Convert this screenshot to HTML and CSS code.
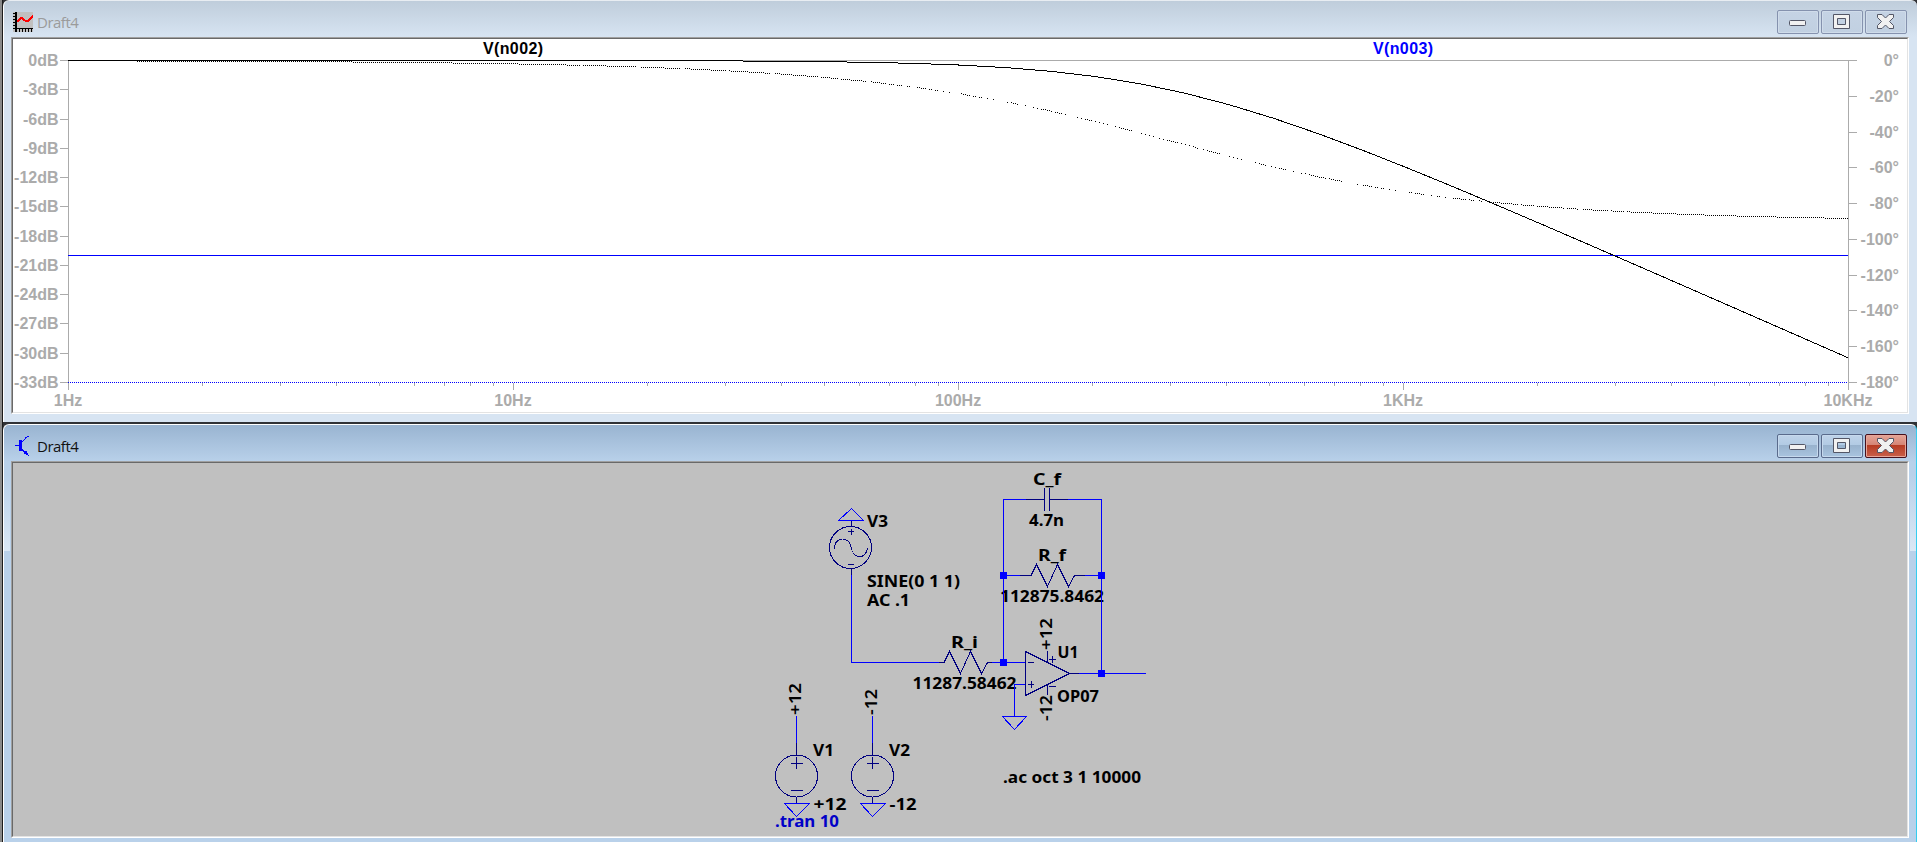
FILE: index.html
```
<!DOCTYPE html>
<html lang="en">
<head>
<meta charset="utf-8">
<title>Draft4</title>
<link rel="stylesheet" href="styles.css">
</head>
<body>
<main class="desktop">
  <section class="window plot-window">
    <header class="titlebar">
      <svg class="app-icon" viewBox="0 0 20 20" shape-rendering="crispEdges">
        <path d="M0 0h20v20H0z" fill="#c0c0c0"/>
        <path d="M2 0h2v20H2zM2 16h18v1H2zM0 1h2v1H0zM0 4h2v1H0zM0 7h2v1H0zM0 10h2v1H0zM0 13h2v1H0zM0 16h2v1H0zM6 17h1v3H6zM9 17h1v3H9zM12 17h1v3h-1zM15 17h1v3h-1zM18 17h1v3h-1z"/>
        <path d="M4 10L7 7Q9 5 11 8Q14 10 16 8L20 4" fill="none" stroke="#f00" stroke-width="2"/>
      </svg>
      <h1 class="title">Draft4</h1>
      <div class="controls">
        <span class="btn"><svg class="glyph" viewBox="0 0 40 22"><rect x="11.5" y="9.5" width="16" height="5" rx="1"/></svg></span>
        <span class="btn"><svg class="glyph" viewBox="0 0 40 22"><path fill-rule="evenodd" d="M11.5 3.5h16v14h-16zM15.500 7.500h8v6h-8z"/></svg></span>
        <span class="btn"><svg class="glyph" viewBox="0 0 40 22"><path d="M11.500 3.500h4.500l3.500 3.500 3.500-3.500h4.500v3l-4 4 4 4v3H23l-3.500-3.500-3.500 3.500h-4.500v-3l4-4-4-4z"/></svg></span>
      </div>
    </header>
    <div class="client plot-client">
      <svg class="plot" viewBox="13 39 1894 373" shape-rendering="crispEdges">
        <g id="axes" class="axes"></g>
        <g id="labels" class="axis-labels"></g>
        <text class="trace-name" x="483" y="54" textLength="60">V(n002)</text>
        <text class="trace-name trace-blue" x="1373" y="54" textLength="60">V(n003)</text>
        <path class="line blue" d="M68 255.5H1848"/>
        <path class="line blue dotted" d="M68 382.500H1848"/>
        <path id="magnitude" class="line"/>
        <path id="phase"/>
      </svg>
    </div>
  </section>

  <section class="window schematic-window">
    <header class="titlebar">
      <svg class="app-icon" viewBox="0 0 20 20" shape-rendering="crispEdges">
        <path d="M2 9h4v1H2zM6 4h3v11H6zM9 5h1v1H9zM10 4h1v1h-1zM11 3h1v1h-1zM12 2h1v1h-1zM12 1h2v1h-2zM14 0h2v1h-2zM9 13h1v2H9zM10 14h1v2h-1zM11 15h2v3h-2zM13 15h1v4h-1zM14 17h1v2h-1zM15 19h1v1h-1z" fill="#00f"/>
      </svg>
      <h1 class="title">Draft4</h1>
      <div class="controls">
        <span class="btn"><svg class="glyph" viewBox="0 0 40 22"><rect x="11.5" y="9.5" width="16" height="5" rx="1"/></svg></span>
        <span class="btn"><svg class="glyph" viewBox="0 0 40 22"><path fill-rule="evenodd" d="M11.5 3.5h16v14h-16zM15.500 7.500h8v6h-8z"/></svg></span>
        <span class="btn btn-close"><svg class="glyph" viewBox="0 0 40 22"><path d="M11.500 3.500h4.500l3.500 3.500 3.500-3.500h4.500v3l-4 4 4 4v3H23l-3.500-3.500-3.500 3.500h-4.500v-3l4-4-4-4z"/></svg></span>
      </div>
    </header>
    <div class="client schematic-client">
      <svg class="schematic" viewBox="13 463 1894 373" shape-rendering="crispEdges">
        <g class="sch-text">
          <text x="867" y="526.500" textLength="21" lengthAdjust="spacingAndGlyphs">V3</text>
          <text x="867" y="586.500" textLength="93" lengthAdjust="spacingAndGlyphs">SINE(0 1 1)</text>
          <text x="867" y="606" textLength="43" lengthAdjust="spacingAndGlyphs">AC .1</text>
          <text x="1033" y="485" textLength="28" lengthAdjust="spacingAndGlyphs">C_f</text>
          <text x="1029" y="526" textLength="35" lengthAdjust="spacingAndGlyphs">4.7n</text>
          <text x="1038" y="561" textLength="28" lengthAdjust="spacingAndGlyphs">R_f</text>
          <text x="1000" y="602" textLength="104" lengthAdjust="spacingAndGlyphs">112875.8462</text>
          <text x="951" y="648" textLength="27" lengthAdjust="spacingAndGlyphs">R_i</text>
          <text x="912.500" y="689" textLength="104" lengthAdjust="spacingAndGlyphs">11287.58462</text>
          <text x="1057.500" y="658" textLength="21" lengthAdjust="spacingAndGlyphs">U1</text>
          <text x="1057" y="702" textLength="42" lengthAdjust="spacingAndGlyphs">OP07</text>
          <text x="813" y="756" textLength="21" lengthAdjust="spacingAndGlyphs">V1</text>
          <text x="889" y="756" textLength="21" lengthAdjust="spacingAndGlyphs">V2</text>
          <text x="813.500" y="810" textLength="33" lengthAdjust="spacingAndGlyphs">+12</text>
          <text x="889.500" y="810" textLength="27" lengthAdjust="spacingAndGlyphs">-12</text>
          <text x="1003" y="783" textLength="138" lengthAdjust="spacingAndGlyphs">.ac oct 3 1 10000</text>
          <text class="tran" x="775" y="827" textLength="64" lengthAdjust="spacingAndGlyphs">.tran 10</text>
          <text class="net" transform="translate(801 715) rotate(-90)" textLength="32" lengthAdjust="spacingAndGlyphs">+12</text>
          <text class="net" transform="translate(877 715) rotate(-90)" textLength="26" lengthAdjust="spacingAndGlyphs">-12</text>
          <text class="net" transform="translate(1052 650) rotate(-90)" textLength="32" lengthAdjust="spacingAndGlyphs">+12</text>
          <text class="net" transform="translate(1052 721) rotate(-90)" textLength="26" lengthAdjust="spacingAndGlyphs">-12</text>
        </g>
        <g class="wire">
          <path d="M851.500 575V662.500H940M991 662.500H1025M1003.500 662V499.500H1026M1068 499.500H1101.500V673M1004 575.500H1020M1085 575.500H1101M1079 673.500H1146M1025 684.500H1014.500V716"/>
          <path d="M796.500 716V743M872.500 716V743"/>
          <path d="M838.500 520.500H863.500L851.500 508.500ZM1002.500 716.500H1026.500L1014.500 729.500ZM784.500 803.500H809.500L796.500 816.500ZM860.500 803.500H885.500L872.500 816.500Z"/>
        </g>
        <g class="part">
          <circle cx="850.500" cy="547.500" r="21"/>
          <path d="M851.500 521V527M851.500 569V575M848 531.500H854M851.500 529V535M848 564.500H854M834.500 549C834.500 537 847 536 850.500 545C852.500 560 866 560 867.500 548"/>
          <circle cx="796.500" cy="776" r="21"/>
          <circle cx="872.500" cy="776" r="21"/>
          <path d="M796.500 743V755M872.500 743V755M796.500 797V803M872.500 797V803M791 763.500H803M796.500 757V769M867 763.500H879M872.500 757V769M791 790.500H803M867 790.500H879"/>
          <path d="M939 662.500H944L949.500 651.500 960.500 673.500 970.500 651.500 981.500 673.500 987.500 662.500H992"/>
          <path d="M1020 575.500H1031L1036.500 564.500 1047.500 586.500 1057.500 564.500 1068.500 586.500 1074.500 575.500H1085"/>
          <path d="M1026 499.500H1044.500M1049.500 499.500H1068M1044.500 488V511M1049.500 488V511"/>
          <path d="M1025.500 651.500V695.500L1069.500 673.500ZM1069 673.500H1079M1047.500 651V662M1047.500 684V695M1028 662.500H1034M1028 684.500H1034M1031.500 681V688M1049 659.500H1056M1052.500 656V663M1049 686.500H1056"/>
        </g>
        <path class="junction" d="M1000 572h7v7h-7zM1098 572h7v7h-7zM1000 659h7v7h-7zM1098 670h7v7h-7z"/>
      </svg>
    </div>
  </section>
</main>
<script src="plot.js"></script>
</body>
</html>
```
FILE: styles.css
```
* { box-sizing: border-box; }
body { margin: 0; background: #303030; }
.desktop {
  width: 1917px;
  height: 842px;
  overflow: hidden;
  padding-left: 3px;
  background: linear-gradient(90deg, #8a8a8a 0 2px, #1c1c1c 2px 3px, #303236 3px);
}
.window {
  display: flex;
  flex-direction: column;
  border: 1px solid #fff;
  border-right-width: 0;
  border-radius: 6px 6px 0 0;
  padding: 0 8px 0 7px;
}
.plot-window {
  height: 422px;
  border-top-color: #e8edf2;
  border-bottom-width: 0;
  background: linear-gradient(#bfcddb 0, #d7e4f2 36px);
}
.schematic-window {
  height: 429px;
  margin-top: 2px;
  border-bottom-width: 0;
  border-right: 1px solid #35cdf0;
  padding-right: 7px;
  background:
    linear-gradient(#b9d1ea, #dbe8f5) 100% 50px / 6px 76px no-repeat,
    linear-gradient(#b9d1ea, #dbe8f5) 0 50px / 6px 76px no-repeat,
    linear-gradient(#99b4d1 0, #b9d1ea 37px);
}
.titlebar {
  display: flex;
  align-items: flex-start;
  flex: none;
  height: 36px;
  padding: 9px 2px 0;
}
.app-icon { width: 20px; height: 20px; margin-top: 2px; }
.title {
  flex: 1;
  margin: 1px 0 0 4px;
  font: 15px/22px "Open Sans", "Noto Sans", sans-serif;
  letter-spacing: -0.5px;
  color: #9b9b9b;
}
.schematic-window .title { color: #111; }
.controls { display: flex; gap: 2px; }
.btn {
  width: 42px;
  height: 24px;
  border: 1px solid #8592ae;
  border-radius: 2px;
  background: linear-gradient(#c5d3e4, #c1d0e1);
  box-shadow: inset 0 0 0 1px #d0dcea;
}
.schematic-window .btn {
  border-color: #5a6b8c;
  background: linear-gradient(#bfd3e9 0, #b2cbe4 45%, #98b2cd 46%, #a9c4df 100%);
  box-shadow: inset 0 0 0 1px #c6d9ed;
}
.schematic-window .btn-close {
  border-color: #46101c;
  background: linear-gradient(#e5a598 0, #d58575 45%, #b63b22 46%, #c9604b 100%);
  box-shadow: inset 0 0 0 1px #e6a699;
}
.glyph { display: block; width: 40px; height: 22px; fill: #f1f1f1; stroke: #535666; }
.client {
  flex: none;
  border: 1px solid;
  border-color: #a0a0a0 #fff #fff #a0a0a0;
}
.plot, .schematic {
  display: block;
  width: 1896px;
  height: 375px;
  border: 1px solid;
  border-color: #696969 #e3e3e3 #e3e3e3 #696969;
}
.plot { background: #fff; }
.schematic { background: #c0c0c0; }
.axes { fill: none; stroke: #ababab; }
.axis-labels, .trace-name { font: bold 16px "Liberation Sans", Arial, sans-serif; }
.axis-labels { fill: #ababab; }
.end { text-anchor: end; }
.middle { text-anchor: middle; }
.trace-blue { fill: #00f; }
.line { fill: none; stroke: #000; }
.blue { stroke: #00f; }
.dotted { stroke-dasharray: 1 1; }
.sch-text { font: 700 16px "Noto Sans", "Open Sans", sans-serif; }
.tran { fill: #0000c8; }
.net { font-weight: 600; }
.wire { fill: none; stroke: #00f; }
.part { fill: none; stroke: #000080; }
.junction { fill: #00f; }
```
FILE: plot.js
```
const LEFT = 68, RIGHT = 1848, TOP = 60, BOTTOM = 382;
const SPAN = BOTTOM - TOP, DECADE = (RIGHT - LEFT) / 4;
const CORNER = 1 / (2 * Math.PI * 112875.8462 * 4.7e-9);
const NS = 'http://www.w3.org/2000/svg';
const byId = id => document.getElementById(id);

function label(x, y, text, cls) {
  const node = document.createElementNS(NS, 'text');
  node.setAttribute('x', x);
  node.setAttribute('y', y);
  node.setAttribute('class', cls);
  node.textContent = text;
  byId('labels').append(node);
}

let axes = `M${LEFT} ${TOP + .5}H${RIGHT}M${LEFT + .5} ${TOP}V390M${RIGHT + .5} ${TOP}V390`;
for (let i = 0; i <= 11; i++) {
  const y = Math.round(TOP + i * SPAN / 11);
  axes += `M60 ${y + .5}H68`;
  label(58.5, y + 6, `${i ? -3 * i : 0}dB`, 'end');
}
for (let i = 0; i <= 9; i++) {
  const y = Math.round(TOP + i * SPAN / 9);
  axes += `M1849 ${y + .5}H1857`;
  label(1899, y + 6, `${i ? -20 * i : 0}°`, 'end');
}
['1Hz', '10Hz', '100Hz', '1KHz', '10KHz'].forEach((name, d) => {
  const x = LEFT + d * DECADE;
  axes += `M${x + .5} 383V390`;
  label(x, 406, name, 'middle');
  if (d < 4) for (let k = 2; k < 10; k++) {
    axes += `M${Math.round(x + Math.log10(k) * DECADE) + .5} 383V386`;
  }
});
const axisPath = document.createElementNS(NS, 'path');
axisPath.setAttribute('d', axes);
byId('axes').append(axisPath);

const magY = f => TOP + 10 * Math.log10(1 + (f / CORNER) ** 2) * SPAN / 33;
const phaseY = f => TOP + Math.atan(f / CORNER) * 180 / Math.PI * SPAN / 180;

// Three points per octave, joined by straight segments.
const points = [];
for (let i = 0; i < 40; i++) points.push(2 ** (i / 3));
points.push(10000);
const xOf = f => LEFT + Math.log10(f) * DECADE;
byId('magnitude').setAttribute('d', 'M' + points.map(f => `${xOf(f)} ${magY(f) + .5}`).join('L'));

// Spans where the dotted pen skips.
const skips = [[537,539],[580,583],[635,640],[679,684],[725,729],[770,775],[817,821],[838,841],
[866,871],[885,888],[893,896],[901,906],[909,916],[925,928],[932,934],[937,942],[943,948],[949,961],
[970,973],[976,979],[982,987],[988,993],[994,1006],[1007,1010],[1017,1024],[1025,1033],[1034,1037],
[1038,1041],[1051,1054],[1061,1064],[1065,1077],[1078,1081],[1082,1085],[1092,1095],[1096,1099],
[1100,1103],[1104,1107],[1108,1114],[1115,1118],[1131,1140],[1141,1144],[1145,1148],[1149,1152],
[1153,1159],[1160,1163],[1164,1167],[1178,1181],[1182,1185],[1186,1189],[1190,1193],[1197,1203],
[1204,1207],[1220,1229],[1230,1233],[1234,1237],[1238,1241],[1242,1254],[1255,1258],[1266,1270],
[1271,1274],[1275,1278],[1285,1292],[1293,1301],[1302,1305],[1306,1309],[1325,1328],[1341,1357],
[1358,1362],[1371,1375],[1378,1381],[1384,1389],[1390,1395],[1396,1408],[1411,1414],[1424,1430],
[1431,1436],[1439,1444],[1445,1452],[1465,1468],[1473,1478],[1481,1486],[1518,1521],[1534,1537],
[1563,1566],[1577,1582],[1607,1610],[1623,1626]];
let dots = `M${LEFT} ${TOP}h69v1h-69z`;
for (let x = 137; x < RIGHT; x += 2) {
  if (skips.some(([a, b]) => x > a && x < b)) continue;
  const t = (x - LEFT) / DECADE * Math.log2(10) * 3;
  const i = Math.min(Math.floor(t), points.length - 2);
  const a = points[i], b = points[i + 1];
  const k = (x - xOf(a)) / (xOf(b) - xOf(a));
  const y = Math.max(61, Math.round(phaseY(a) + k * (phaseY(b) - phaseY(a))));
  dots += `M${x} ${y}h1v1h-1z`;
}
byId('phase').setAttribute('d', dots);
```
